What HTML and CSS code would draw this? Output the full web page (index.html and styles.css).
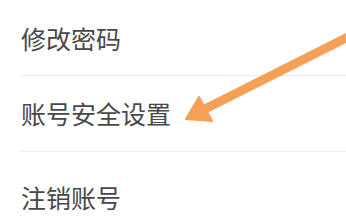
FILE: index.html
```html
<!DOCTYPE html>
<html lang="zh-CN">
<head>
<meta charset="utf-8">
<link rel="stylesheet" href="styles.css">
</head>
<body>
<div class="page">
  <ul class="menu">
    <li class="item item-first"><span class="label">修改密码</span></li>
    <li class="item"><span class="label">账号安全设置</span></li>
    <li class="item item-last"><span class="label">注销账号</span></li>
  </ul>
  <svg class="arrow" width="346" height="220" viewBox="0 0 346 220" xmlns="http://www.w3.org/2000/svg">
    <line x1="358" y1="32" x2="203" y2="110" stroke="#F6A057" stroke-width="9"/>
    <polygon points="186,119 199,97 212,121" fill="#F6A057" stroke="#F6A057" stroke-width="2" stroke-linejoin="round"/>
  </svg>
</div>
</body>
</html>
```
FILE: styles.css
```css
html, body {
  margin: 0;
  padding: 0;
  background: #ffffff;
}
.page {
  position: relative;
  width: 346px;
  height: 220px;
  overflow: hidden;
}
.menu {
  list-style: none;
  margin: 0;
  padding: 0 0 0 20px;
}
.item {
  display: flex;
  align-items: center;
  height: 76px;
  padding-left: 1px;
  border-bottom: 1px solid #efefef;
  box-sizing: border-box;
}
.item-first {
  height: 76px;
  padding-top: 2px;
}
.item-last {
  border-bottom: none;
  height: 86px;
  padding-top: 4px;
}
.label {
  font-family: "Noto Sans CJK SC", "Noto Sans", sans-serif;
  font-size: 25px;
  line-height: 25px;
  color: #484848;
  letter-spacing: 0;
}
.arrow {
  position: absolute;
  left: 0;
  top: 0;
}
```
